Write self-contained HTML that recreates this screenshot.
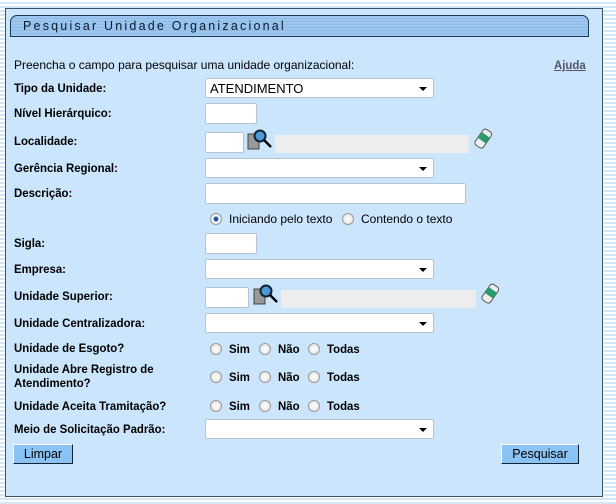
<!DOCTYPE html>
<html><head><meta charset="utf-8"><style>
body{margin:0;width:616px;height:504px;overflow:hidden;background:repeating-linear-gradient(to bottom,#fff 0,#fff 2px,#d3e6f5 2px,#d3e6f5 4px);font-family:"Liberation Sans",sans-serif;font-size:12px;color:#000;position:relative}
.panel{position:absolute;left:5px;top:8px;width:598px;height:489px;background:#cbe5fc;border:1px solid #3d5366;box-sizing:border-box}
.hdr{position:absolute;left:10px;top:15px;width:579px;height:22px;box-sizing:border-box;border:1px solid #1a3a5a;border-radius:7px 7px 0 0;background:repeating-linear-gradient(to bottom,#9ec7ef 0,#9ec7ef 2px,#8dbbe8 2px,#8dbbe8 3px);font-size:12.5px;letter-spacing:2.2px;padding:3px 0 0 12px;color:#0a1a2a}
.t{position:absolute;white-space:nowrap}
.b{font-weight:bold;font-size:12px;transform:scaleX(.95);transform-origin:left}
.in{position:absolute;background:#fff;border:1px solid #b5c4d0;box-sizing:border-box;border-radius:2px}
.sel::after{content:"";position:absolute;right:6px;top:8px;border-left:4px solid transparent;border-right:4px solid transparent;border-top:4px solid #000}
.gray{position:absolute;background:#ededed}
.r{position:absolute;width:10px;height:10px;border-radius:50%;border:1px solid #999;background:radial-gradient(#fff,#ddd)}
.r.on{background:radial-gradient(#1d5ba0 0,#1d5ba0 2px,#fff 3px,#ddd)}
.btn{position:absolute;height:20px;background:#8cc3f5;border:1px solid;border-color:#fff #123 #123 #fff;box-sizing:border-box;font-size:12.5px;padding:2px 0 0;text-align:center}
</style></head><body>
<div class="panel"></div>
<div class="hdr">Pesquisar Unidade Organizacional</div>
<div class="t" style="left:14px;top:58px">Preencha o campo para pesquisar uma unidade organizacional:</div>
<div class="t b" style="left:554px;top:58px;color:#556;text-decoration:underline">Ajuda</div>

<div class="t b" style="left:14px;top:81px">Tipo da Unidade:</div>
<div class="in sel" style="left:205px;top:78px;width:229px;height:20px;font-size:13px;padding:2px 0 0 4px">ATENDIMENTO</div>

<div class="t b" style="left:14px;top:106px">Nível Hierárquico:</div>
<div class="in" style="left:205px;top:103px;width:52px;height:21px"></div>

<div class="t b" style="left:14px;top:134px">Localidade:</div>
<div class="in" style="left:205px;top:132px;width:39px;height:21px"></div>
<svg style="position:absolute;left:246px;top:128px" width="28" height="24"><rect x="2" y="6" width="11" height="15" fill="#999" stroke="#444"/><circle cx="14" cy="8" r="5.5" fill="#4a9ad8" stroke="#123" stroke-width="2"/><line x1="18" y1="12" x2="25" y2="19" stroke="#000" stroke-width="2.5"/></svg>
<div class="gray" style="left:275px;top:135px;width:194px;height:18px"></div>
<svg style="position:absolute;left:473px;top:128px" width="20" height="22"><g transform="rotate(35 10 11)"><rect x="5" y="1" width="10" height="19" rx="3" fill="#eee" stroke="#555"/><rect x="5" y="6" width="10" height="7" fill="#2a9a6a"/></g></svg>

<div class="t b" style="left:14px;top:161px">Gerência Regional:</div>
<div class="in sel" style="left:205px;top:158px;width:229px;height:20px"></div>

<div class="t b" style="left:14px;top:186px">Descrição:</div>
<div class="in" style="left:205px;top:183px;width:261px;height:21px"></div>

<div class="r on" style="left:210px;top:213px"></div><div class="t" style="left:229px;top:212px">Iniciando pelo texto</div>
<div class="r" style="left:342px;top:213px"></div><div class="t" style="left:361px;top:212px">Contendo o texto</div>

<div class="t b" style="left:14px;top:236px">Sigla:</div>
<div class="in" style="left:205px;top:233px;width:52px;height:21px"></div>

<div class="t b" style="left:14px;top:262px">Empresa:</div>
<div class="in sel" style="left:205px;top:259px;width:229px;height:20px"></div>

<div class="t b" style="left:14px;top:289px">Unidade Superior:</div>
<div class="in" style="left:205px;top:287px;width:44px;height:21px"></div>
<svg style="position:absolute;left:252px;top:283px" width="28" height="24"><rect x="2" y="6" width="11" height="15" fill="#999" stroke="#444"/><circle cx="14" cy="8" r="5.5" fill="#4a9ad8" stroke="#123" stroke-width="2"/><line x1="18" y1="12" x2="25" y2="19" stroke="#000" stroke-width="2.5"/></svg>
<div class="gray" style="left:281px;top:290px;width:195px;height:18px"></div>
<svg style="position:absolute;left:480px;top:283px" width="20" height="22"><g transform="rotate(35 10 11)"><rect x="5" y="1" width="10" height="19" rx="3" fill="#eee" stroke="#555"/><rect x="5" y="6" width="10" height="7" fill="#2a9a6a"/></g></svg>

<div class="t b" style="left:14px;top:316px">Unidade Centralizadora:</div>
<div class="in sel" style="left:205px;top:313px;width:229px;height:20px"></div>

<div class="t b" style="left:14px;top:341px">Unidade de Esgoto?</div>
<div class="t b" style="left:14px;top:362px;line-height:14px">Unidade Abre Registro de<br>Atendimento?</div>
<div class="t b" style="left:14px;top:399px">Unidade Aceita Tramitação?</div>

<div class="r" style="left:210px;top:343px"></div><div class="t b" style="left:229px;top:342px">Sim</div>
<div class="r" style="left:259px;top:343px"></div><div class="t b" style="left:278px;top:342px">Não</div>
<div class="r" style="left:308px;top:343px"></div><div class="t b" style="left:327px;top:342px">Todas</div>

<div class="r" style="left:210px;top:371px"></div><div class="t b" style="left:229px;top:370px">Sim</div>
<div class="r" style="left:259px;top:371px"></div><div class="t b" style="left:278px;top:370px">Não</div>
<div class="r" style="left:308px;top:371px"></div><div class="t b" style="left:327px;top:370px">Todas</div>

<div class="r" style="left:210px;top:400px"></div><div class="t b" style="left:229px;top:399px">Sim</div>
<div class="r" style="left:259px;top:400px"></div><div class="t b" style="left:278px;top:399px">Não</div>
<div class="r" style="left:308px;top:400px"></div><div class="t b" style="left:327px;top:399px">Todas</div>

<div class="t b" style="left:14px;top:422px">Meio de Solicitação Padrão:</div>
<div class="in sel" style="left:205px;top:419px;width:229px;height:20px"></div>

<div class="btn" style="left:13px;top:444px;width:60px">Limpar</div>
<div class="btn" style="left:501px;top:444px;width:78px">Pesquisar</div>
</body></html>
